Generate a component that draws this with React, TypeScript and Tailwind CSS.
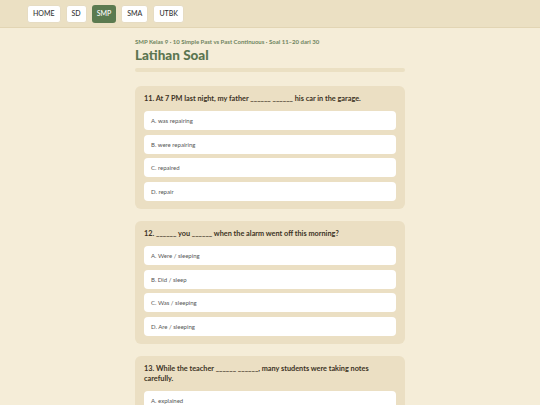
import React from 'react'

const nav = ['HOME', 'SD', 'SMP', 'SMA', 'UTBK']

const questions = [
  {
    n: 11,
    q: 'At 7 PM last night, my father ______ ______ his car in the garage.',
    opts: ['A. was repairing', 'B. were repairing', 'C. repaired', 'D. repair'],
  },
  {
    n: 12,
    q: '______ you ______ when the alarm went off this morning?',
    opts: ['A. Were / sleeping', 'B. Did / sleep', 'C. Was / sleeping', 'D. Are / sleeping'],
  },
  {
    n: 13,
    q: 'While the teacher ______ ______, many students were taking notes carefully.',
    opts: ['A. explained', 'B. was explaining', 'C. explains', 'D. is explaining'],
  },
]

export default function App() {
  return (
    <div className="min-h-screen bg-[#f5edd8] font-['Lato','Noto_Sans',sans-serif]">
      <header className="h-[28px] bg-[#ebe0c3] border-b border-[#e2d5b4] flex items-center gap-[5px] pl-[27px]">
        {nav.map((n) => (
          <button
            key={n}
            className={
              n === 'SMP'
                ? 'h-[18px] px-[5px] rounded-[3px] bg-[#5b7a4f] text-white text-[7px] font-medium'
                : 'h-[18px] px-[5px] rounded-[3px] bg-white border border-[#e6dcc3] text-[#333] text-[7px] font-medium'
            }
          >
            {n}
          </button>
        ))}
      </header>

      <main className="w-[270px] mx-auto pt-[10px]">
        <p className="text-[6px] font-bold text-[#6f8560] leading-[8px]">
          SMP Kelas 9 · 10 Simple Past vs Past Continuous · Soal 11–20 dari 30
        </p>
        <h1 className="text-[13.5px] font-black text-[#5b7550] leading-[16px] mt-[1px]">Latihan Soal</h1>
        <div className="h-[4px] rounded-full bg-[#ebe0c3] mt-[5px]" />

        <div className="flex flex-col gap-[12px] mt-[14px]">
          {questions.map((q) => (
            <section key={q.n} className="bg-[#ebdfc3] rounded-[6px] px-[9px] pt-[8px] pb-[8px]">
              <p className="text-[7.3px] font-bold text-[#3b3223] leading-[10px] pr-[8px]">
                {q.n}. {q.q}
              </p>
              <div className="flex flex-col gap-[4.7px] mt-[7px]">
                {q.opts.map((o) => (
                  <div
                    key={o}
                    className="h-[19px] bg-white rounded-[4px] flex items-center px-[7px] text-[6px] text-[#555]"
                  >
                    {o}
                  </div>
                ))}
              </div>
            </section>
          ))}
        </div>
      </main>
    </div>
  )
}
